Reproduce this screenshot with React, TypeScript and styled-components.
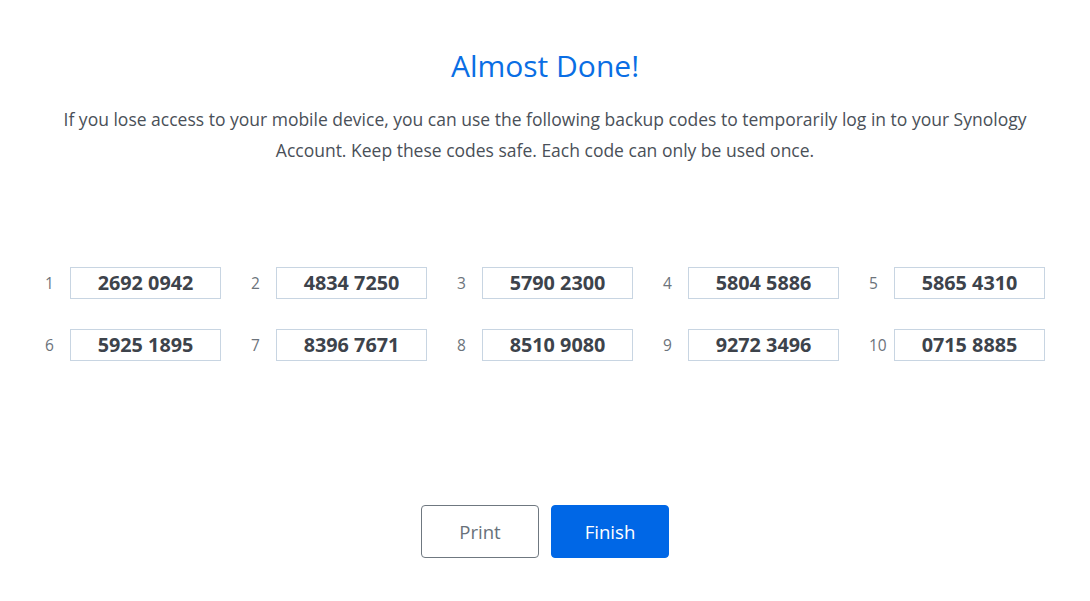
import * as React from "react";
import styled, { createGlobalStyle } from "styled-components";

const GlobalStyle = createGlobalStyle`
  html, body {
    margin: 0;
    padding: 0;
    background: #ffffff;
    font-family: "Open Sans", "Noto Sans", Arial, sans-serif;
  }
`;

const Page = styled.div`
  width: 1090px;
  height: 601px;
  display: flex;
  flex-direction: column;
  align-items: center;
  box-sizing: border-box;
  padding-top: 46px;
`;

const Title = styled.h1`
  margin: 0;
  font-size: 30px;
  font-weight: 400;
  line-height: 40px;
  color: #0a6ee4;
`;

const Description = styled.p`
  margin: 18px 0 0;
  width: 1000px;
  text-align: center;
  font-size: 17.5px;
  line-height: 31px;
  color: #4a5058;
`;

const CodeGrid = styled.div`
  margin-top: 101px;
  display: grid;
  grid-template-columns: repeat(5, 176px);
  column-gap: 30px;
  row-gap: 30px;
`;

const CodeCell = styled.div`
  display: flex;
  align-items: center;
`;

const CodeIndex = styled.span`
  width: 25px;
  font-size: 15.5px;
  color: #6c737b;
`;

const CodeBox = styled.div`
  width: 151px;
  height: 32px;
  box-sizing: border-box;
  padding-bottom: 2px;
  border: 1px solid #c8d5e2;
  display: flex;
  align-items: center;
  justify-content: center;
  font-size: 19.8px;
  font-weight: 700;
  color: #3d434b;
`;

const Actions = styled.div`
  margin-top: 144px;
  display: flex;
  gap: 12px;
`;

const Button = styled.button<{ $primary?: boolean }>`
  width: 118px;
  height: 53px;
  border-radius: 4px;
  font-family: inherit;
  font-size: 18.6px;
  cursor: pointer;
  border: 1px solid ${p => (p.$primary ? "#0067e6" : "#6f7880")};
  background: ${p => (p.$primary ? "#0067e6" : "#ffffff")};
  color: ${p => (p.$primary ? "#ffffff" : "#68717a")};
`;

const codes = [
  "2692 0942",
  "4834 7250",
  "5790 2300",
  "5804 5886",
  "5865 4310",
  "5925 1895",
  "8396 7671",
  "8510 9080",
  "9272 3496",
  "0715 8885"
];

export default function App() {
  return (
    <>
      <GlobalStyle />
      <Page>
        <Title>Almost Done!</Title>
        <Description>
          If you lose access to your mobile device, you can use the following
          backup codes to temporarily log in to your Synology Account. Keep
          these codes safe. Each code can only be used once.
        </Description>
        <CodeGrid>
          {codes.map((code, i) => (
            <CodeCell key={code}>
              <CodeIndex>{i + 1}</CodeIndex>
              <CodeBox>{code}</CodeBox>
            </CodeCell>
          ))}
        </CodeGrid>
        <Actions>
          <Button>Print</Button>
          <Button $primary>Finish</Button>
        </Actions>
      </Page>
    </>
  );
}
